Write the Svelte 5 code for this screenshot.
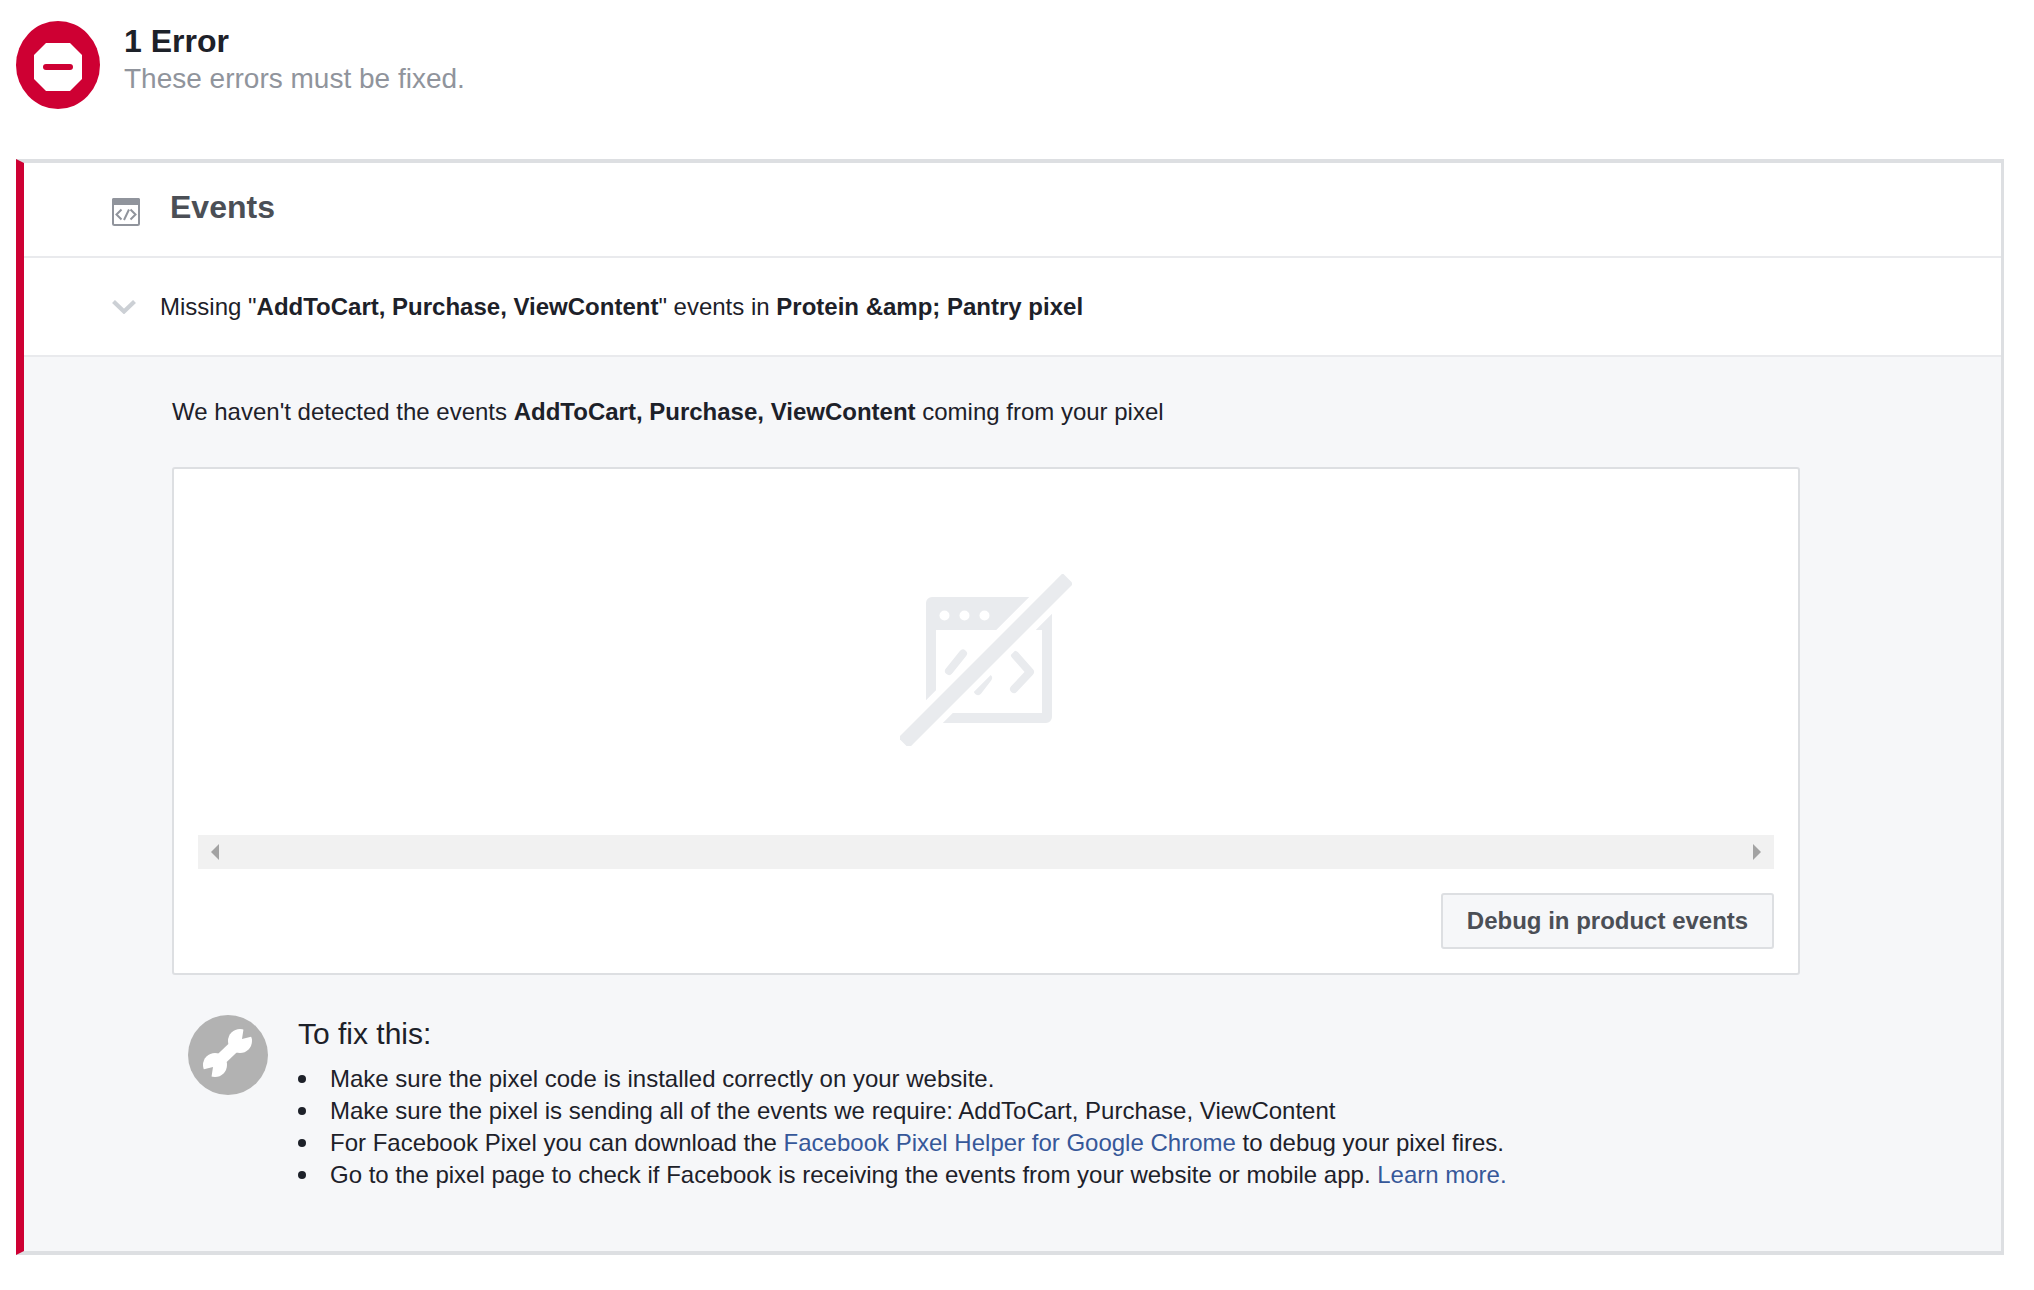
<script>
	const fixes = [
		{ text: 'Make sure the pixel code is installed correctly on your website.' },
		{ text: 'Make sure the pixel is sending all of the events we require: AddToCart, Purchase, ViewContent' },
		{
			text: 'For Facebook Pixel you can download the ',
			link: 'Facebook Pixel Helper for Google Chrome',
			after: ' to debug your pixel fires.'
		},
		{
			text: 'Go to the pixel page to check if Facebook is receiving the events from your website or mobile app. ',
			link: 'Learn more.'
		}
	];
</script>

<div class="page">
	<header class="summary">
		<svg class="stop" viewBox="0 0 84 88" width="84" height="88" aria-hidden="true">
			<ellipse cx="42" cy="44" rx="42" ry="44" fill="#ce0033" />
			<polygon points="30,22 54,22 66,34 66,58 54,70 30,70 18,58 18,34" fill="#fff" />
			<rect x="27" y="43" width="30" height="6" rx="3" fill="#ce0033" />
		</svg>
		<div class="summary__text">
			<div class="summary__title">1 Error</div>
			<div class="summary__sub">These errors must be fixed.</div>
		</div>
	</header>

	<section class="card">
		<div class="card__head">
			<svg class="head-icon" viewBox="0 0 28 28" width="28" height="28" aria-hidden="true">
				<rect x="1" y="1" width="26" height="26" rx="1.5" fill="#fff" stroke="#90949c" stroke-width="2" />
				<rect x="0" y="0" width="28" height="7" rx="1.5" fill="#90949c" />
				<path d="M9.500 11.500L4.500 16.500l5 5M18.500 11.500l5 5-5 5M17 11.500L12 22" fill="none" stroke="#90949c" stroke-width="2" />
			</svg>
			<h2>Events</h2>
		</div>

		<div class="issue">
			<svg class="chevron" viewBox="0 0 24 14" width="24" height="14" aria-hidden="true">
				<path d="M1.500 1.500l10.500 10 10.500-10" fill="none" stroke="#ccd0d5" stroke-width="4.200" />
			</svg>
			<span>Missing "<b>AddToCart, Purchase, ViewContent</b>" events in <b>Protein &amp;amp; Pantry pixel</b></span>
		</div>

		<div class="detail">
			<p class="detail__lead">
				We haven't detected the events <b>AddToCart, Purchase, ViewContent</b> coming from your pixel
			</p>

			<div class="panel">
				<div class="empty">
					<svg viewBox="0 0 172 172" width="172" height="172" aria-hidden="true">
						<path
							fill="#e9ebee"
							fill-rule="evenodd"
							d="M32 23h114a6 6 0 0 1 6 6v114a6 6 0 0 1-6 6H32a6 6 0 0 1-6-6V29a6 6 0 0 1 6-6zM36 56v83h106V56z"
						/>
						<g fill="#fff">
							<circle cx="44.500" cy="41.500" r="5" />
							<circle cx="64.500" cy="41.500" r="5" />
							<circle cx="84.500" cy="41.500" r="5" />
						</g>
						<path
							d="M63 79.500L49 97M115 81l15 17-16 17M88 104l-10 13"
							fill="none"
							stroke="#e9ebee"
							stroke-width="8"
							stroke-linecap="round"
							stroke-linejoin="round"
						/>
						<path d="M172 0L0 172" stroke="#fff" stroke-width="28" />
						<path d="M168 4.500L3.500 169" stroke="#e9ebee" stroke-width="15" />
					</svg>
				</div>
				<div class="scrollbar">
					<span class="arrow arrow--left"></span>
					<span class="arrow arrow--right"></span>
				</div>
				<div class="panel__foot">
					<button type="button">Debug in product events</button>
				</div>
			</div>

			<div class="fix">
				<svg class="wrench" viewBox="0 0 80 80" width="80" height="80" aria-hidden="true">
					<circle cx="40" cy="40" r="40" fill="#b2b2b2" />
					<path d="M50 28L29 48" stroke="#fff" stroke-width="12" />
					<circle cx="52" cy="26" r="12" fill="#fff" />
					<circle cx="27" cy="50" r="12" fill="#fff" />
					<path d="M54 24l2-13 10 10zM25 52l-2 13-10-10z" fill="#b2b2b2" />
				</svg>
				<div class="fix__body">
					<h3>To fix this:</h3>
					<ul>
						{#each fixes as fix}
							<li>
								<span>{fix.text}{#if fix.link}<a href="#fix">{fix.link}</a>{/if}{fix.after ?? ''}</span>
							</li>
						{/each}
					</ul>
				</div>
			</div>
		</div>
	</section>
</div>

<style>
	:global(body) {
		margin: 0;
		background: #fff;
	}

	.page {
		font-family: 'Liberation Sans', Arial, sans-serif;
		color: #1d2129;
		height: 1290px;
		box-sizing: border-box;
		padding: 21px 30px 0 16px;
	}

	.summary {
		display: flex;
		align-items: flex-start;
		gap: 24px;
		height: 138px;
	}

	.summary__title {
		font-size: 32px;
		font-weight: 700;
		line-height: 40px;
	}

	.summary__sub {
		font-size: 28px;
		line-height: 36px;
		color: #90949c;
	}

	.card {
		border-left: 8px solid #ce0033;
		border-top: 4px solid #dddfe2;
		border-right: 3px solid #dddfe2;
		border-bottom: 4px solid #dddfe2;
		height: 1096px;
		box-sizing: border-box;
		display: flex;
		flex-direction: column;
	}

	.card__head {
		display: flex;
		align-items: flex-start;
		height: 95px;
		box-sizing: border-box;
		padding: 26px 0 0 88px;
		border-bottom: 2px solid #e9eaed;
	}

	.head-icon {
		margin-top: 9px;
	}

	.card__head h2 {
		margin: 0 0 0 30px;
		font-size: 32px;
		line-height: 37px;
		font-weight: 700;
		color: #4b4f56;
	}

	.issue {
		display: flex;
		align-items: center;
		height: 99px;
		box-sizing: border-box;
		padding-left: 88px;
		gap: 24px;
		font-size: 24px;
		border-bottom: 2px solid #e9eaed;
	}

	.detail {
		flex: 1;
		background: #f6f7f9;
		padding: 35px 0 0 148px;
	}

	.detail__lead {
		margin: 0 0 35px;
		font-size: 24px;
		line-height: 40px;
	}

	.panel {
		width: 1628px;
		height: 508px;
		box-sizing: border-box;
		background: #fff;
		border: 2px solid #dddfe2;
		border-radius: 3px;
		padding: 0 24px;
		display: flex;
		flex-direction: column;
	}

	.empty {
		height: 366px;
		display: flex;
		justify-content: center;
		align-items: flex-start;
		padding-top: 105px;
		box-sizing: border-box;
	}

	.scrollbar {
		height: 34px;
		background: #f1f1f1;
		display: flex;
		align-items: center;
		justify-content: space-between;
		padding: 0 13px;
	}

	.arrow {
		width: 0;
		height: 0;
		border-top: 8px solid transparent;
		border-bottom: 8px solid transparent;
	}

	.arrow--left {
		border-right: 8px solid #a3a3a3;
	}

	.arrow--right {
		border-left: 8px solid #a3a3a3;
	}

	.panel__foot {
		display: flex;
		justify-content: flex-end;
		padding-top: 24px;
	}

	button {
		height: 56px;
		width: 333px;
		font: 700 24px 'Liberation Sans', Arial, sans-serif;
		color: #4b4f56;
		background: #f6f7f9;
		border: 2px solid #dddfe2;
		border-radius: 3px;
		padding: 0;
	}

	.fix {
		display: flex;
		margin: 40px 0 0 16px;
		gap: 30px;
	}

	.fix__body h3 {
		margin: 1px 0 0;
		font-size: 30px;
		font-weight: 400;
		line-height: 36px;
	}

	ul {
		margin: 11px 0 0;
		padding: 0;
		list-style: none;
		font-size: 24px;
		line-height: 32px;
	}

	li {
		display: flex;
		align-items: center;
	}

	li::before {
		content: '';
		width: 8px;
		height: 8px;
		border-radius: 50%;
		background: #1d2129;
		margin-right: 24px;
	}

	a {
		color: #365899;
		text-decoration: none;
	}
</style>
